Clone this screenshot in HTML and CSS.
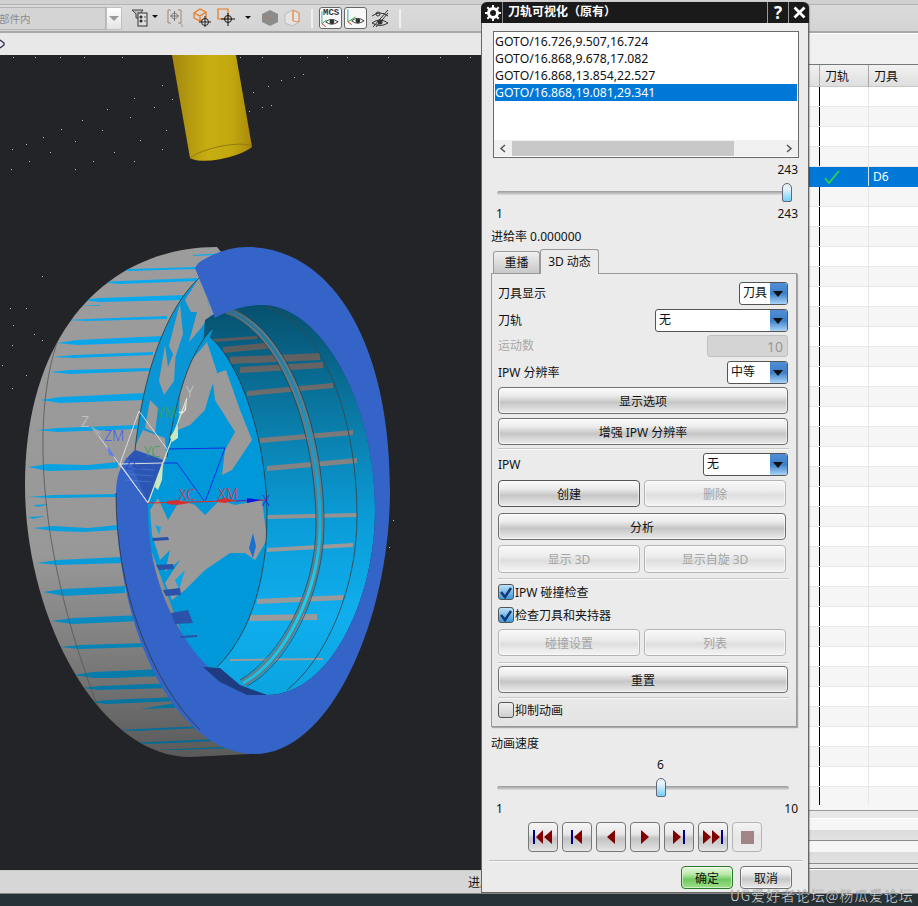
FILE: index.html
```html
<!DOCTYPE html>
<html lang="zh">
<head>
<meta charset="utf-8">
<title>刀轨可视化</title>
<link rel="stylesheet" href="styles.css">
</head>
<body>
<div class="app">
  <div class="topstrip"></div>
  <div class="toolbar">
    <div class="filter"><span class="filter-text">部件内</span></div>
    <div class="filter-btn"><svg width="12" height="7" viewBox="0 0 12 7"><path d="M1 1h10L6 6z" fill="#999"/></svg></div>
    <svg class="ico i-filter" width="28" height="20" viewBox="0 0 28 20"><path d="M1 2h11l-3 4v4H5V6z" fill="#bbb" stroke="#444"/><rect x="7" y="5" width="9" height="13" fill="#ddd" stroke="#333"/><path d="M9 8h2v2H9zM9 12h2v2H9zM13 9h2M13 13h2" fill="#333" stroke="#333" stroke-width=".8"/><path d="M21 7h6l-3 3z" fill="#111"/></svg>
    <svg class="ico i-bracket" width="18" height="20" viewBox="0 0 18 20"><path d="M4 2H1v13h3M11 2h3v13h-3" fill="none" stroke="#998877"/><circle cx="7.500" cy="8" r="3" fill="none" stroke="#888"/><path d="M7.500 3v10M3 8h9" stroke="#777"/><path d="M13 15q3 1 2 4" fill="none" stroke="#999"/></svg>
    <svg class="ico i-cube" width="20" height="20" viewBox="0 0 20 20"><path d="M1 5l6-4 6 3v6l-6 3-6-3zM1 5l6 3 6-4M7 8v5" fill="none" stroke="#e8781a" stroke-width="1.200"/><circle cx="12" cy="14" r="3.500" fill="#ddd" stroke="#222"/><path d="M12 8v11M6 14h12" stroke="#222"/></svg>
    <svg class="ico i-square" width="22" height="20" viewBox="0 0 22 20"><path d="M1 1h10v10H1z" fill="none" stroke="#e8781a" stroke-width="1.200"/><circle cx="11" cy="11" r="3.500" fill="none" stroke="#111"/><path d="M11 5v13M4 11h14" stroke="#111"/></svg>
    <svg class="ico i-caret" width="6" height="4" viewBox="0 0 6 4"><path d="M0 0h6L3 3z" fill="#111"/></svg>
    <svg class="ico i-hex" width="18" height="18" viewBox="0 0 18 18"><path d="M9 1l8 4v8l-8 4-8-4V5z" fill="#8c8c8c"/><path d="M5 8l8 3" stroke="#a08070"/></svg>
    <svg class="ico i-box" width="16" height="18" viewBox="0 0 16 18"><path d="M1 5l8-4 6 3v9l-7 4-7-3z" fill="#e4e4e4" stroke="#bbb"/><path d="M9 1v11M9 1l6 3v9l-6-1z" fill="none" stroke="#e89050"/></svg>
    <span class="sep"></span>
    <div class="viewbtn"><span class="mcs">MCS</span><svg width="22" height="20" viewBox="0 0 22 20"><path d="M2 3v13" stroke="#3aa" fill="none"/><path d="M2 16l5-4" stroke="#2b2" fill="none"/><path d="M2 16l4 3" stroke="#d22" fill="none"/><path d="M6 14q6-5 13 0-7 5-13 0z" fill="#fff" stroke="#333"/><circle cx="12.500" cy="14" r="2.500" fill="#333"/></svg></div>
    <div class="viewbtn"><svg width="22" height="22" viewBox="0 0 22 22"><path d="M3 3v13" stroke="#2aa" fill="none"/><path d="M3 16l8-5" stroke="#2b2" fill="none"/><path d="M3 16l4 3" stroke="#d22" fill="none"/><path d="M7 15q6-5 13 0-7 5-13 0z" fill="#fff" stroke="#333"/><circle cx="13.500" cy="15" r="2.500" fill="#333"/></svg></div>
    <svg class="ico i-off" width="18" height="20" viewBox="0 0 18 20"><path d="M1 8q8-6 16 0M1 15q8-6 16 0-8 5-16 0z" fill="none" stroke="#333"/><circle cx="9" cy="14" r="2.500" fill="#333"/><circle cx="7" cy="6" r="2" fill="none" stroke="#333"/><path d="M2 19L17 2M5 19L17 5" stroke="#333"/></svg>
    <span class="sep sep2"></span>
  </div>
  <div class="work">
    <div class="left">
      <div class="navrow"><svg width="5" height="10" viewBox="0 0 5 10"><path d="M0 1l4 3v2L0 9" fill="none" stroke="#224" stroke-width="1.200"/></svg></div>
      <div class="viewport">
        <svg class="scene" width="808" height="815" viewBox="0 55 808 815">
          <defs>
            <linearGradient id="tool" x1="0" x2="1" y1="0" y2="0"><stop offset="0" stop-color="#a3870f"/><stop offset=".45" stop-color="#c7ae10"/><stop offset=".75" stop-color="#c2a80f"/><stop offset="1" stop-color="#a8870c"/></linearGradient>
            <linearGradient id="grey" gradientUnits="userSpaceOnUse" x1="0" x2="0" y1="247" y2="757"><stop offset="0" stop-color="#9c9c9c"/><stop offset=".6" stop-color="#989898"/><stop offset=".78" stop-color="#808080"/><stop offset="1" stop-color="#5a5a5a"/></linearGradient>
            <linearGradient id="stripe" gradientUnits="userSpaceOnUse" x1="0" x2="0" y1="247" y2="757"><stop offset="0" stop-color="#0aaaf0"/><stop offset=".6" stop-color="#0a9edc"/><stop offset=".78" stop-color="#0884b6"/><stop offset="1" stop-color="#06668c"/></linearGradient>
            <linearGradient id="wall" gradientUnits="userSpaceOnUse" x1="0" x2="0" y1="305" y2="695"><stop offset="0" stop-color="#06506e"/><stop offset=".3" stop-color="#0a7ca8"/><stop offset=".55" stop-color="#0a9cd8"/><stop offset=".8" stop-color="#10aeee"/><stop offset="1" stop-color="#0aa4e0"/></linearGradient>
            <linearGradient id="wallgrey" gradientUnits="userSpaceOnUse" x1="0" x2="0" y1="305" y2="695"><stop offset="0" stop-color="#505050"/><stop offset=".3" stop-color="#767676"/><stop offset=".6" stop-color="#9a9a9a"/></linearGradient>
            <linearGradient id="groove" gradientUnits="userSpaceOnUse" x1="0" x2="0" y1="310" y2="683"><stop offset="0" stop-color="#2a7090"/><stop offset=".5" stop-color="#12a8dc"/><stop offset=".75" stop-color="#18d0f4"/><stop offset="1" stop-color="#18c0e8"/></linearGradient>
            <path id="pGrey" d="M217 247C110 247 25 330 25 485C25 620 100 757 190 757L250 754L260 300Z"/>
            <path id="pWall" d="M205 320C225 305 245 305 262 305C320 305 375 400 375 510C375 600 330 695 267 695L215 680L190 500Z"/>
            <path id="pDisc" d="M210 337C240 362 267 440 267 515C267 590 245 640 217 667L195 670L140 520L148 503L167 457C175 400 190 350 213 328Z"/>
            <path id="pWedge" d="M199 278C165 310 143 375 135 450L167 460C175 400 190 350 213 328L207 297Z"/>
            <clipPath id="cGrey"><use href="#pGrey"/></clipPath>
            <clipPath id="cWall"><use href="#pWall"/></clipPath>
            <clipPath id="cDisc"><use href="#pDisc"/></clipPath>
            <clipPath id="cWedge"><use href="#pWedge"/></clipPath>
          </defs>
          <path d="M172 55h64l16 92A34 10 -12 0 1 190 158z" fill="url(#tool)"/>
          <path d="M190 158A34 9 -12 0 1 252 146" fill="none" stroke="#937a10"/>
          <path class="dots" d="M13 57h1v1h-1zM35 57h1v1h-1zM60 57h1v1h-1zM84 57h1v1h-1zM122 57h1v1h-1zM240 57h1v1h-1zM262 57h1v1h-1zM300 57h1v1h-1zM327 57h1v1h-1zM347 57h1v1h-1zM388 57h1v1h-1zM440 57h1v1h-1zM470 57h1v1h-1zM303 74h1v1h-1zM294 77h1v1h-1zM281 80h1v1h-1zM268 86h1v1h-1zM162 85h1v1h-1zM172 99h1v1h-1zM134 98h1v1h-1zM107 109h1v1h-1zM154 107h1v1h-1zM82 120h1v1h-1zM253 92h1v1h-1zM271 105h1v1h-1zM262 107h1v1h-1zM249 111h1v1h-1zM130 117h1v1h-1zM61 129h1v1h-1zM102 130h1v1h-1zM166 130h1v1h-1zM43 137h1v1h-1zM75 141h1v1h-1zM140 140h1v1h-1zM26 144h1v1h-1zM12 149h1v1h-1zM50 152h1v1h-1zM114 152h1v1h-1zM162 149h1v1h-1zM29 161h1v1h-1zM93 161h1v1h-1zM134 161h1v1h-1zM11 169h1v1h-1zM75 169h1v1h-1zM42 276h1v1h-1zM10 308h1v1h-1zM26 308h1v1h-1zM13 325h1v1h-1zM34 334h1v1h-1zM42 340h1v1h-1zM12 345h1v1h-1zM2 365h1v1h-1zM26 375h1v1h-1zM12 388h1v1h-1zM393 520h1v1h-1zM389 547h1v1h-1z"/>
          <use href="#pGrey" fill="url(#grey)"/>
          <path clip-path="url(#cGrey)" fill="url(#stripe)" d="M193 255l47-3v2l-47 2zM110 270l20-1 65-2v2l-65 2zM100 282l20-1 77-3v3l-77 3zM80 300l20-2 85-3v5l-85 2zM77 306l23-1v1zM67 320l20-1 80-3v3l-80 2zM57 343l20-3 85-4v6l-85 3zM53 357l20-2 80-3v3l-80 3zM50 372l20-2 80-2v3l-80 3zM40 400l20-3 85-4v7l-85 3zM37 430l20-2 80-3v4l-80 3zM28 467l20-3 40 1 30-3v6l-30 2-40 1zM28 497l25-2 65-1v3l-65 1zM33 505l17-1-12 3zM28 517l18-1-13 3zM33 528l20-2 35 2 30-3v5l-35 2-30-1zM37 563l20-3 65-3v6l-65 2zM43 592l20-3 62-3v7l-62 3zM52 621l20-3 70-3v6l-70 3zM60 647l20-2 65-2v4l-65 2zM73 675l20-3 70-3v7l-50 2-20 0zM80 688l20-2 72-3v5l-72 2zM87 702l20-2 72-3v4l-72 3zM140 709l35-6v5zM117 730l20-1 65-3v2l-65 3zM130 743l20-1 65-3v2l-65 3zM157 750l20-1 65-3v2l-65 2z"/>
          <path d="M62 330C35 390 28 530 100 712" fill="none" stroke="#555" stroke-width=".8" clip-path="url(#cGrey)"/>
          <use href="#pWedge" fill="#0a96d4"/>
          <path clip-path="url(#cWedge)" fill="#9a9a9a" d="M199 278l-14 22 6 12 6 0-8 30 12-14 6-8 6 12-3-40zM180 304l3 30-8 24-6-12 5-20zM165 345l3 22 8-20-2 34-10 14-5-14zM150 400l8 8-3 25-10-5zM143 430l22 8 2 22-34-10z"/>
          <use href="#pWall" fill="url(#wall)"/>
          <path clip-path="url(#cWall)" fill="url(#wallgrey)" d="M213 339l44-3v3l-44 3zM223 347l50-5v6l-50 5zM230 357l90-4v7l-90 4zM240 367l83-5v6l-83 5zM247 391l86-8v5l-86 8zM260 438l93-8v5l-93 8zM267 466l90-8v5l-90 8zM267 515l90-2v4l-90 2zM267 548l86-5v4l-86 5zM257 599l86-4v5l-86 4zM250 615l67-1v6l-67 1zM230 659l93-1v2l-93 1z"/>
          <path d="M226 310C285 330 320 430 320 525C320 590 285 660 243 683" fill="none" stroke="#6a7a80" stroke-width="7"/>
          <path d="M226 310C285 330 320 430 320 525C320 590 285 660 243 683" fill="none" stroke="url(#groove)" stroke-width="3"/>
          <path d="M222 311C281 331 316 431 316 525C316 590 281 656 240 680M230 309C289 329 324 429 324 525C324 592 289 664 247 686" fill="none" stroke="#2e3e46" stroke-width=".7"/>
          <path d="M267 307C325 325 357 420 357 517C357 590 325 660 287 690" fill="none" stroke="#37474f" stroke-width=".9"/>
          <use href="#pDisc" fill="#0098d8"/>
          <path clip-path="url(#cDisc)" fill="#9a9a9a" d="M180 392l10-30 17-20 10 30-7 20-5 18-15 15-12 5zM212 375l14-5 14 40 12 30-20 30-10 5 3-25 10-18-20-32zM150 510l8-12 10 22 12-20 15 5 10 10 15-15 15 5 27-5 5 40-12 20-10-7-15 0-25 17-20 20-13 10-7-17 15-23-15 12 5-22-10 10-8-25z"/>
          <path clip-path="url(#cDisc)" fill="#0fa6e4" d="M155 525l6 2-2 8zM175 580l10-10-6 20z"/>
          <path fill="#3464c8" d="M195 268Q198 262 203 260Q225 247 247 247C330 247 390 340 390 490C390 620 330 754 255 754C180 754 116 640 116 493Q116 470 128 457L135 450L163 460L148 503V510C148 610 210 695 267 695C330 695 375 600 375 510C375 400 320 305 262 305C245 305 228 310 215 318L207 297L199 278Z"/>
          <path d="M203 667l17 1 20 17 27 10-20 0-27-13z" fill="#1f3c80"/>
          <path d="M152 538l16-1 1 3-16 1zM156 565l17-1 1 5-15 1zM163 590l17-2 1 7-15 1zM171 613l17-3 5 13-18 1zM180 636l17-1v2l-16 1z" fill="#2a52a8"/>
          <path d="M253 533l3 13-3 12-4-10z" fill="#1a6fd0"/>
          <path d="M128 457l7-7 28 10-15 43z" fill="#2d56b4"/>
          <path d="M130 462l25 2M128 468l27 2M126 474l27 2M125 480l26 2" stroke="#5b84d8" stroke-width=".5"/>
          <path d="M116 493C116 590 150 680 200 730M199 278C165 310 143 375 135 450M213 328C190 350 175 400 167 457M210 337C240 362 267 440 267 515C267 590 245 640 217 667" fill="none" stroke="#333" stroke-width=".8"/>
          <path d="M148 503L120 464L139 411L167 449M120 464L163 463M148 503L92 427" fill="none" stroke="#d5dde0" stroke-width="1"/>
          <path d="M167 449L225 448L205 502L177 463L163 463" fill="none" stroke="#1030e0" stroke-width="1"/>
          <path d="M148 503L187 398" stroke="#d8e8d0" stroke-width="1.200"/>
          <path d="M148 503L267 500" stroke="#d03030" stroke-width="1.200"/>
          <path d="M236 501L250 500" stroke="#2040e0" stroke-width="1"/>
          <path d="M167 501l10-1 13 3-13 2-10-1zM217 500l8-2 9 2-9 3-8-1z" fill="#d43030"/>
          <path d="M247 498l15 2-15 3z" fill="#0a18e0"/>
          <path d="M155 487l3-12 5-10-1 15-4 10zM170 437l8-12 0 13-6 4z" fill="#c8e8c0"/>
          <path d="M184 411l3-13-1 12-4 4-4-2z" fill="#e8e8e8"/>
          <path d="M92 427l9 5-3 6z" fill="#a8a8a8"/>
          <path d="M107 445l8 12-6-2z" fill="#6080e8"/>
          <text class="axis a-white" x="186" y="397">Y</text>
          <text class="axis a-white" x="81" y="427">Z</text>
          <text class="axis a-green" x="157" y="418">YM</text>
          <text class="axis a-green" x="144" y="457">YC</text>
          <text class="axis a-blue" x="104" y="441">ZM</text>
          <text class="axis a-dim" x="125" y="469">ZC</text>
          <text class="axis a-red" x="179" y="500">XC</text>
          <text class="axis a-red" x="218" y="499">XM</text>
          <text class="axis a-blue2" x="262" y="506">X</text>
        </svg>
      </div>
      <div class="status"><span class="status-gap"></span><span class="status-text">进度</span></div>
    </div>
    <div class="right">
      <div class="right-top"></div>
      <div class="thead"><span class="th th0"></span><span class="th">刀轨</span><span class="th">刀具</span></div>
      <div class="tbody">
        <div class="row"><i></i><i></i><i></i></div>
        <div class="row"><i></i><i></i><i></i></div>
        <div class="row"><i></i><i></i><i></i></div>
        <div class="row"><i></i><i></i><i></i></div>
        <div class="row sel"><i></i><i><svg width="16" height="14" viewBox="0 0 16 14"><path d="M1 8l4 5L15 1" fill="none" stroke="#2fd44a" stroke-width="1.800"/></svg></i><i>D6</i></div>
        <div class="row"><i></i><i></i><i></i></div><div class="row"><i></i><i></i><i></i></div><div class="row"><i></i><i></i><i></i></div>
        <div class="row"><i></i><i></i><i></i></div><div class="row"><i></i><i></i><i></i></div><div class="row"><i></i><i></i><i></i></div>
        <div class="row"><i></i><i></i><i></i></div><div class="row"><i></i><i></i><i></i></div><div class="row"><i></i><i></i><i></i></div>
        <div class="row"><i></i><i></i><i></i></div><div class="row"><i></i><i></i><i></i></div><div class="row"><i></i><i></i><i></i></div>
        <div class="row"><i></i><i></i><i></i></div><div class="row"><i></i><i></i><i></i></div><div class="row"><i></i><i></i><i></i></div>
        <div class="row"><i></i><i></i><i></i></div><div class="row"><i></i><i></i><i></i></div><div class="row"><i></i><i></i><i></i></div>
        <div class="row"><i></i><i></i><i></i></div><div class="row"><i></i><i></i><i></i></div><div class="row"><i></i><i></i><i></i></div>
        <div class="row"><i></i><i></i><i></i></div><div class="row"><i></i><i></i><i></i></div><div class="row"><i></i><i></i><i></i></div>
        <div class="row"><i></i><i></i><i></i></div><div class="row"><i></i><i></i><i></i></div><div class="row"><i></i><i></i><i></i></div>
        <div class="row"><i></i><i></i><i></i></div><div class="row"><i></i><i></i><i></i></div><div class="row"><i></i><i></i><i></i></div>
        <div class="row"><i></i><i></i><i></i></div>
      </div>
      <div class="rfoot">
        <div class="rf rf1"></div>
        <div class="rf rf2"></div>
        <div class="rf rf3"></div>
        <div class="rf rf4"></div>
        <div class="rf rf5"></div>
      </div>
    </div>
  </div>
  <div class="taskbar"></div>

  <div class="dialog">
    <div class="titlebar">
      <svg class="gear" width="16" height="16" viewBox="0 0 16 16"><circle cx="8" cy="8" r="4.500" fill="none" stroke="#fff" stroke-width="3"/><path d="M8 0v3M8 13v3M0 8h3M13 8h3M2.300 2.300l2 2M11.700 11.700l2 2M13.700 2.300l-2 2M4.300 11.700l-2 2" stroke="#fff" stroke-width="2"/></svg>
      <span class="title">刀轨可视化（原有）</span>
      <span class="tb-btn q">?</span>
      <span class="tb-btn x"><svg width="13" height="13" viewBox="0 0 13 13"><path d="M1.500 1.500l10 10M11.500 1.500l-10 10" stroke="#fff" stroke-width="2.800"/></svg></span>
    </div>
    <div class="dbody">
      <div class="listbox">
        <div class="lines">
          <div class="line">GOTO/16.726,9.507,16.724</div>
          <div class="line">GOTO/16.868,9.678,17.082</div>
          <div class="line">GOTO/16.868,13.854,22.527</div>
          <div class="line on">GOTO/16.868,19.081,29.341</div>
        </div>
        <div class="hscroll">
          <svg width="18" height="15" viewBox="0 0 18 15"><path d="M11 4L7 7.500 11 11" fill="none" stroke="#555" stroke-width="1.500"/></svg>
          <span class="thumb"></span>
          <svg class="arrow-r" width="18" height="15" viewBox="0 0 18 15"><path d="M7 4l4 3.500L7 11" fill="none" stroke="#555" stroke-width="1.500"/></svg>
        </div>
      </div>
      <div class="slider s-top">
        <div class="val val-end">243</div>
        <div class="track"><span class="knob knob-end"></span></div>
        <div class="ends"><span>1</span><span>243</span></div>
      </div>
      <div class="feed">进给率 0.000000</div>
      <div class="tabs"><span class="tab">重播</span><span class="tab active">3D 动态</span></div>
      <div class="panel">
        <div class="frow fr1"><span>刀具显示</span><span class="sel-box w49"><b>刀具</b><em></em></span></div>
        <div class="frow"><span>刀轨</span><span class="sel-box w133"><b>无</b><em></em></span></div>
        <div class="frow dis"><span>运动数</span><span class="num">10</span></div>
        <div class="frow"><span>IPW 分辨率</span><span class="sel-box w61"><b>中等</b><em></em></span></div>
        <div class="btn wide b1">显示选项</div>
        <div class="btn wide b2">增强 IPW 分辨率</div>
        <div class="rule r1"></div>
        <div class="frow fr5"><span>IPW</span><span class="sel-box w85"><b>无</b><em></em></span></div>
        <div class="pair p1"><span class="btn strong">创建</span><span class="btn off">删除</span></div>
        <div class="btn narrow b3">分析</div>
        <div class="pair p2"><span class="btn off">显示 3D</span><span class="btn off">显示自旋 3D</span></div>
        <div class="rule r2"></div>
        <label class="check c1"><span class="box on"><svg width="14" height="13" viewBox="0 0 14 13"><path d="M2 6l4 5 6-9" fill="none" stroke="#123a78" stroke-width="2.600"/></svg></span>IPW 碰撞检查</label>
        <label class="check c2"><span class="box on"><svg width="14" height="13" viewBox="0 0 14 13"><path d="M2 6l4 5 6-9" fill="none" stroke="#123a78" stroke-width="2.600"/></svg></span>检查刀具和夹持器</label>
        <div class="pair p3"><span class="btn off">碰撞设置</span><span class="btn off">列表</span></div>
        <div class="rule r3"></div>
        <div class="btn wide b4">重置</div>
        <div class="rule r4"></div>
        <label class="check c3"><span class="box"></span>抑制动画</label>
      </div>
      <div class="speed-label">动画速度</div>
      <div class="slider s-speed">
        <div class="val val-mid">6</div>
        <div class="track"><span class="knob knob-mid"></span></div>
        <div class="ends"><span>1</span><span>10</span></div>
      </div>
      <div class="media">
        <span class="mbtn"><svg width="20" height="14" viewBox="0 0 20 14"><path d="M0 0h2v14H0z" fill="#000080"/><path d="M10 0v14L3 7zM19 0v14l-8-7z" fill="#800000"/></svg></span>
        <span class="mbtn"><svg width="12" height="14" viewBox="0 0 12 14"><path d="M0 0h2v14H0z" fill="#000080"/><path d="M11 0v14L3 7z" fill="#800000"/></svg></span>
        <span class="mbtn"><svg width="8" height="14" viewBox="0 0 8 14"><path d="M8 0v14L0 7z" fill="#800000"/></svg></span>
        <span class="mbtn"><svg width="8" height="14" viewBox="0 0 8 14"><path d="M0 0v14l8-7z" fill="#800000"/></svg></span>
        <span class="mbtn"><svg width="12" height="14" viewBox="0 0 12 14"><path d="M0 0v14l8-7z" fill="#800000"/><path d="M10 0h2v14h-2z" fill="#000080"/></svg></span>
        <span class="mbtn"><svg width="20" height="14" viewBox="0 0 20 14"><path d="M0 0v14l8-7zM9 0v14l8-7z" fill="#800000"/><path d="M18 0h2v14h-2z" fill="#000080"/></svg></span>
        <span class="mbtn moff"><svg width="13" height="13" viewBox="0 0 13 13"><rect width="13" height="13" fill="#a08486"/></svg></span>
      </div>
      <div class="rule r5"></div>
      <div class="actions"><span class="btn ok">确定</span><span class="btn cancel">取消</span></div>
    </div>
  </div>
  <div class="watermark">UG爱好者论坛@杨瓜爱论坛</div>
</div>
</body>
</html>
```

FILE: styles.css
```css
* { box-sizing: border-box; }
html, body { margin: 0; padding: 0; }
body { font-family: "Noto Sans", "Noto Sans CJK SC", sans-serif; font-size: 12px; color: #111; }
.app { position: relative; width: 918px; height: 906px; overflow: hidden; display: flex; flex-direction: column; background: #d6d6d6; }

.topstrip { height: 5px; background: #d0d0d0; border-bottom: 1px solid #b4b4b4; }
.toolbar { height: 28px; display: flex; align-items: center; background: linear-gradient(#dadada, #d4d4d4); border-bottom: 2px solid #a8a8a8; }
.filter { width: 106px; height: 23px; background: #d4d4d4; border: 1px solid #b4b4b4; border-left: 0; display: flex; align-items: center; overflow: hidden; }
.filter-text { font-size: 10.500px; color: #8c8c8c; margin-left: -1px; }
.filter-btn { width: 16px; height: 23px; background: linear-gradient(#fff, #e4e4e4); border: 1px solid #c0c0c0; display: flex; align-items: center; justify-content: center; }
.ico { display: block; flex: none; }
.i-filter { margin-left: 9px; }
.i-bracket { margin-left: 8px; }
.i-cube { margin-left: 8px; }
.i-square { margin-left: 4px; }
.i-caret { margin-left: 6px; }
.i-hex { margin-left: 10px; }
.i-box { margin-left: 5px; }
.sep { width: 2px; height: 19px; background: #f0f0f0; margin-left: 11px; flex: none; }
.viewbtn { position: relative; width: 23px; height: 22px; margin-left: 2px; background: #f8f8f8; border: 1px solid #666; border-radius: 3px; display: flex; align-items: flex-end; justify-content: center; flex: none; overflow: hidden; }
.sep + .viewbtn { margin-left: 6px; }
.mcs { position: absolute; left: 3px; top: 0; font: 700 9px/10px "Liberation Mono", monospace; color: #333; }
.i-off { margin-left: 4px; }
.sep2 { margin-left: 10px; }

.work { flex: 1; display: flex; min-height: 0; }
.left { width: 808px; display: flex; flex-direction: column; }
.navrow { height: 22px; background: #e8e8e8; display: flex; align-items: center; }
.viewport { height: 815px; background: #232428; border-top: 0; overflow: hidden; }
.scene { display: block; }
.dots { fill: #b8bcc0; }
.axis { font-family: "Noto Sans", sans-serif; font-size: 14px; font-weight: 300; }
.a-white { fill: #c8c8c8; }
.a-green { fill: #3aa05a; }
.a-blue { fill: #4060f0; }
.a-dim { fill: #2a48b8; }
.a-red { fill: #e03038; }
.a-blue2 { fill: #1020e0; }
.status { height: 23px; display: flex; align-items: center; background: #d6d6d6; border-top: 1px solid #c8c8c8; }
.status-gap { width: 468px; flex: none; }
.status-text { font-size: 12px; }

.right { width: 110px; display: flex; flex-direction: column; background: #f0f0f0; }
.right-top { height: 32px; background: #f0f0f0; border-top: 1px solid #fff; border-bottom: 1px solid #777; }
.thead { height: 22px; display: grid; grid-template-columns: 11px 49px 50px; background: linear-gradient(#f2f2f2, #dedede); border-bottom: 1px solid #c8c8c8; }
.th { border-left: 1px solid #aaa; padding-left: 5px; line-height: 23px; font-size: 12px; }
.th0 { border-left: 0; }
.tbody { height: 718px; overflow: hidden; }
.row { height: 20px; display: grid; grid-template-columns: 11px 49px 50px; background: #fff; border-bottom: 1px solid #e8e8e8; }
.row:nth-child(even) { background: #f6f6f6; }
.row i { font-style: normal; display: flex; align-items: center; border-left: 1px solid #e8e8e8; padding-left: 4px; }
.row i:first-child { border-left: 0; }
.row i:nth-child(2) { border-left: 1px solid #000; }
.row.sel { background: #0078d7; border-bottom-color: #0078d7; color: #fff; }
.row.sel i:nth-child(2) { border-left-color: #0078d7; }
.row.sel i:nth-child(3) { border-left-color: #cfe4f7; }
.rfoot { display: flex; flex-direction: column; flex: 1; }
.rf1 { height: 6px; background: #f6f6f6; border-bottom: 1px solid #999; }
.rf2 { height: 8px; background: #e8e8e8; border-bottom: 1px solid #fff; }
.rf3 { height: 22px; background: linear-gradient(#f6f6f6 50%, #dcdcdc 50%, #e2e2e2); border-bottom: 1px solid #8c8c8c; }
.rf4 { height: 23px; background: linear-gradient(#f6f6f6 50%, #dcdcdc 50%, #e2e2e2); border-bottom: 1px solid #8c8c8c; }
.rf5 { flex: 1; background: linear-gradient(#e8e8e8 4px, #777 4px, #777 5px, #fff 5px, #fff 6px, #d6d6d6 6px); }

.taskbar { height: 13px; background: #263236; border-top: 1px solid #888; }

.dialog { position: absolute; left: 481px; top: 2px; width: 328px; height: 891px; background: #ebebeb; border: 1px solid #666; border-top: 0; border-radius: 6px 6px 0 0; box-shadow: 1px 0 1px rgba(0,0,0,.25); }
.titlebar { height: 21px; background: #1a1a1a; border-radius: 6px 6px 0 0; display: flex; align-items: center; color: #fff; margin: 0 -1px; }
.gear { margin-left: 4px; flex: none; }
.title { margin-left: 1px; padding-left: 5px; border-left: 1px solid #888; height: 21px; line-height: 20px; font-size: 12px; font-weight: 700; flex: 1; }
.tb-btn { width: 21px; height: 21px; border-left: 1px solid #999; display: flex; align-items: center; justify-content: center; font-size: 17px; font-weight: 700; }

.dbody { padding: 8px 9px 0 9px; }
.listbox { margin-left: 2px; width: 306px; height: 127px; background: #fff; border: 1px solid #6a6a6a; display: flex; flex-direction: column; }
.lines { flex: 1; padding: 1px 1px 0 1px; }
.line { height: 17px; line-height: 17px; font-size: 12.250px; color: #111; white-space: nowrap; }
.line.on { background: #0078d7; color: #fff; }
.hscroll { height: 16px; margin-bottom: 1px; background: #f0f0f0; display: flex; align-items: center; }
.hscroll svg { flex: none; }
.thumb { width: 222px; height: 15px; background: #c8c8c8; }
.arrow-r { margin-left: auto; }

.slider { position: relative; }
.s-top { height: 67px; margin-top: 3px; }
.val { text-align: right; line-height: 17px; height: 17px; padding-right: 1px; }
.val-mid { text-align: center; margin-left: 3px; position: relative; left: 14px; padding-right: 0; }
.track { position: relative; height: 4px; margin: 13px 0 0 6px; width: 292px; background: linear-gradient(#999, #ddd); border-radius: 2px; }
.knob { position: absolute; top: -8px; width: 10px; height: 19px; border: 1px solid #667; border-radius: 5px 5px 2px 2px; background: linear-gradient(#e4f2fa 30%, #70d0f8); }
.knob-end { right: -3px; }
.knob-mid { left: 159px; }
.ends { display: flex; justify-content: space-between; padding-left: 5px; padding-right: 1px; margin-top: 11px; line-height: 16px; }
.feed { height: 17px; line-height: 17px; }
.tabs { display: flex; align-items: flex-end; height: 28px; margin-left: 2px; }
.tab { width: 47px; height: 22px; text-align: center; line-height: 21px; border: 1px solid #999; border-bottom: 0; border-radius: 3px 3px 0 0; background: linear-gradient(#f0f0f0, #c8c8c8); }
.tab.active { width: 59px; height: 25px; line-height: 24px; background: #ebebeb; margin-bottom: -1px; position: relative; z-index: 1; }
.panel { width: 306px; height: 454px; background: linear-gradient(#ebebeb 90%, #e4e4e4); border: 1px solid #999; box-shadow: 1px 1px 1px #aaa; padding: 8px 7px 0 6px; }
.frow { display: flex; justify-content: space-between; align-items: center; height: 23px; margin-bottom: 3px; padding-right: 1px; }
.frow > span:first-child { padding-bottom: 2px; }
.fr1 { margin-bottom: 4px; }
.fr5 > span:first-child { padding-bottom: 0; }
.dis { color: #a8a8a8; height: 22px; margin-bottom: 4px; }
.sel-box { display: flex; height: 23px; border: 1px solid #555; border-radius: 3px; background: #fff; overflow: hidden; }
.sel-box b { flex: 1; font-weight: 400; padding-left: 3px; line-height: 20px; }
.sel-box em { width: 17px; background: linear-gradient(#4f8ed6, #3f7fc8 50%, #a8d4f8); position: relative; flex: none; }
.sel-box em::after { content: ""; position: absolute; left: 3px; top: 8px; border: 5px solid transparent; border-top: 6px solid #111; border-bottom: 0; }
.w49 { width: 49px; } .w61 { width: 61px; } .w85 { width: 85px; } .w133 { width: 133px; }
.num { width: 81px; height: 22px; background: #d4d4d4; border: 1px solid #c0c0c0; border-radius: 3px; text-align: right; padding-right: 4px; font-size: 14px; line-height: 21px; color: #999; }
.btn { display: block; text-align: center; height: 27px; line-height: 27px; border: 1px solid #707070; border-radius: 4px; background: linear-gradient(#fafafa, #ececec 30%, #c6c6c6 58%, #dadada 80%, #eaeaea); box-shadow: inset 0 0 0 1px rgba(255,255,255,.5); }
.wide { width: 290px; }
.narrow { width: 288px; }
.b1 { margin-top: 1px; }
.b2 { margin-top: 4px; }
.rule { height: 1px; background: #c8c8c8; box-shadow: 0 1px 0 #f8f8f8; }
.r1 { margin-top: 3px; width: 291px; }
.fr5 { margin-top: 4px; margin-bottom: 4px; }
.pair { display: flex; gap: 4px; }
.pair .btn { width: 142px; }
.strong { border-color: #555; }
.off { color: #a4a4a4; border-color: #b4b4b4; background: linear-gradient(#f8f8f8, #ececec 40%, #dedede 55%, #eee 85%, #f2f2f2); }
.b3 { margin-top: 6px; }
.p2 { margin-top: 5px; height: 28px; }
.p2 .btn { height: 28px; }
.r2 { margin-top: 5px; width: 291px; }
.check { display: flex; align-items: center; height: 16px; gap: 1px; }
.c1 { margin-top: 5px; }
.c2 { margin-top: 7px; }
.box { width: 16px; height: 16px; border: 1px solid #555; border-radius: 3px; background: linear-gradient(#f0f0f0, #cfcfcf); display: flex; align-items: center; justify-content: center; flex: none; }
.box.on { background: linear-gradient(#bfe2fa, #3f98d8); }
.p3 { margin-top: 6px; }
.r3 { margin-top: 6px; width: 291px; }
.b4 { margin-top: 3px; }
.r4 { margin-top: 4px; width: 291px; }
.c3 { margin-top: 4px; }
.speed-label { height: 17px; line-height: 17px; margin-top: 8px; }
.s-speed { height: 60px; margin-top: 4px; }
.media { display: flex; gap: 4px; padding-left: 37px; margin-top: 6px; }
.mbtn { width: 30px; height: 30px; border: 1px solid #777; border-radius: 4px; background: linear-gradient(#f6f6f6, #e6e6e6 40%, #c4c4c4 55%, #d8d8d8 85%, #e8e8e8); display: flex; align-items: center; justify-content: center; }
.moff { border-color: #b4b4b4; background: linear-gradient(#f4f4f4, #e6e6e6 50%, #ececec); }
.r5 { margin-top: 8px; margin-left: -2px; width: 313px; background: #bcbcbc; }
.actions { display: flex; justify-content: flex-end; gap: 7px; padding-right: 7px; margin-top: 5px; }
.ok, .cancel { width: 52px; height: 23px; line-height: 23px; }
.ok { border-color: #2a7a2a; background: linear-gradient(#e8f8e0, #b8e8a8 35%, #70c860 60%, #a0e088); }

.watermark { position: absolute; left: 730px; top: 889px; font-family: "Noto Sans CJK SC", sans-serif; font-weight: 300; font-size: 14px; line-height: 12px; letter-spacing: .9px; color: #dcdcdc; text-shadow: 0 0 1px #333; white-space: nowrap; }
```
